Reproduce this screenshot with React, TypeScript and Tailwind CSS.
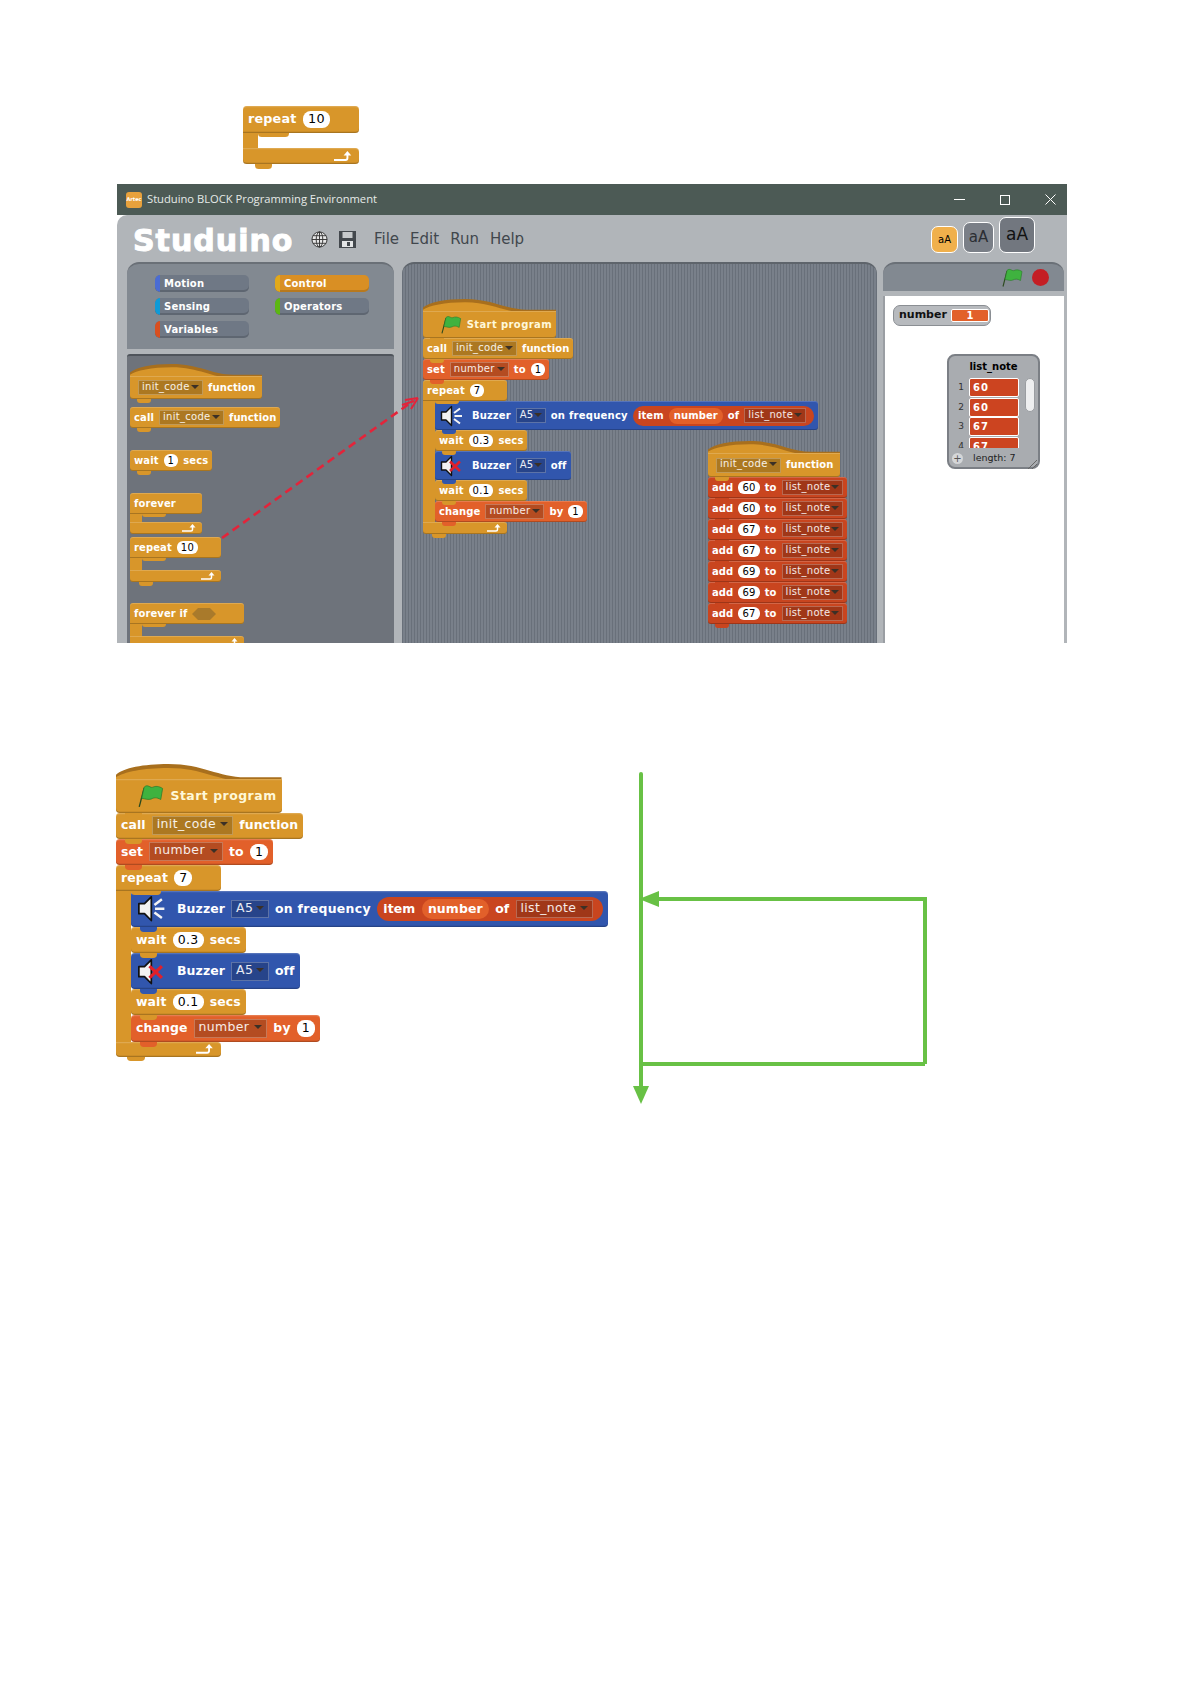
import React from "react";

type Tone = "control" | "variable" | "list" | "motion";
const toneBg: Record<Tone, string> = {
  control: "bg-[#d8962a]",
  variable: "bg-[#e2602a]",
  list: "bg-[#c9451f]",
  motion: "bg-[#3156ad]",
};
const bevel = "shadow-[inset_0_-1px_0_rgba(0,0,0,0.22),inset_0_1px_0_rgba(255,255,255,0.18)]";

function Block({ tone, className = "", children, bump = true }: { tone: Tone; className?: string; children?: React.ReactNode; bump?: boolean }) {
  const sized = /(^|\s)w-/.test(className);
  return (
    <div className={`relative flex h-[21px] items-center gap-[5px] rounded-[3px] px-[4px] ${sized ? "" : "w-fit"} ${toneBg[tone]} ${bevel} ${className}`}>
      {children}
      {bump && <div className={`absolute top-full left-[7px] z-10 h-[4px] w-[14px] rounded-b-[3px] ${toneBg[tone]}`} />}
    </div>
  );
}

function T({ children }: { children: React.ReactNode }) {
  return <span className="whitespace-nowrap text-[10px] leading-none font-bold tracking-[0.1px] text-white">{children}</span>;
}

function Num({ children }: { children: React.ReactNode }) {
  return <span className="flex h-[13px] items-center rounded-[6px] bg-white px-[4px] text-[10px] leading-none tracking-[0.3px] text-black">{children}</span>;
}

function Drop({ children, className = "" }: { children: React.ReactNode; className?: string }) {
  return (
    <span className={`flex h-[15px] items-center justify-between border border-white/25 bg-black/20 pr-[3px] pb-[2px] pl-[3px] text-[10px] leading-none tracking-[0.3px] text-white/90 ${className}`}>
      {children}
      <span className="h-0 w-0 border-x-[4px] border-t-[4px] border-x-transparent border-t-[#3b3026]" />
    </span>
  );
}

function Flag({ className = "" }: { className?: string }) {
  return (
    <svg viewBox="0 0 21 19" className={className}>
      <path d="M1 18.5 L5 3" stroke="#2c4a1e" strokeWidth="1.1" fill="none" />
      <path d="M5 2.5 C8 -0.5 10 3.5 12 2.5 C14 1.5 17 1.5 20 3.5 L18.5 12.5 C15 10.5 13 11 11 12 C8.5 13 6 12 3 11.5 Z" fill="#3fb23f" stroke="#2a7a2a" strokeWidth="0.6" />
    </svg>
  );
}

function Hat({ tone = "control", width, children, bodyClass = "" }: { tone?: Tone; width: string; children: React.ReactNode; bodyClass?: string }) {
  return (
    <div className={`relative pt-[12px] ${width}`}>
      <svg viewBox="0 0 133 14" preserveAspectRatio="none" className="absolute top-0 left-0 h-[15px] w-full">
        <path d="M0 15 V8 C6 3 22 0 42 0 C70 0 82 10 104 10 H133 V15 Z" fill="#a86f1d" />
        <path d="M0 15 V10 C6 6 22 3 42 3 C70 3 82 13 104 13 H133 V15 Z" fill="#d8962a" />
      </svg>
      <Block tone={tone} className={`w-full rounded-t-none ${bodyClass}`}>{children}</Block>
    </div>
  );
}

function ReturnArrow() {
  return (
    <svg viewBox="0 0 15 8" className="h-[8px] w-[15px]">
      <path d="M0 7 H9 Q10.5 7 10.5 5.5 V3" stroke="white" strokeWidth="1.5" fill="none" />
      <path d="M7.5 3.5 L10.5 0 L13.5 3.5 Z" fill="white" />
    </svg>
  );
}

function Loop({ head, width, children, footBump = true }: { head: React.ReactNode; width: string; children?: React.ReactNode; footBump?: boolean }) {
  return (
    <div className="flex w-fit flex-col items-start">
      <Block tone="control" bump={false} className={`${width} h-[20px] rounded-bl-none`}>
        {head}
        <div className="absolute top-full left-[12px] z-10 h-[3px] w-[24px] rounded-b-[3px] bg-[#d8962a]" />
      </Block>
      <div className="flex">
        <div className="w-[12px] self-stretch bg-[#d8962a]" />
        <div className="flex flex-col">{children}</div>
      </div>
      <div className={`relative flex h-[12px] items-center justify-end rounded-[3px] rounded-tl-none bg-[#d8962a] pr-[5px] ${bevel} ${width}`}>
        <ReturnArrow />
        {footBump && <div className="absolute top-full left-[9px] z-10 h-[4px] w-[14px] rounded-b-[3px] bg-[#d8962a]" />}
      </div>
    </div>
  );
}

function Speaker({ off }: { off?: boolean }) {
  return (
    <svg viewBox="0 0 24 22" className="h-[22px] w-[24px]">
      <path d="M1.5 7 H6 L11.5 1.5 V20.5 L6 15 H1.5 Z" fill="#f2f2f2" stroke="#111" strokeWidth="1.4" strokeLinejoin="round" />
      {off ? (
        <path d="M10 6.5 L20 16 M20 6.5 L10 16" stroke="#e0202a" strokeWidth="2.6" />
      ) : (
        <path d="M14 8 L20 3.5 M14.5 11 H22 M14 14 L20 18.5" stroke="#f4f4f4" strokeWidth="2" />
      )}
    </svg>
  );
}

function MainScript() {
  return (
    <div className="flex w-fit flex-col font-['DejaVu_Sans',sans-serif]">
      <Hat width="w-[133px]" bodyClass="h-[27px] pl-[18px] gap-[3px]">
        <Flag className="h-[19px] w-[21px]" />
        <span className="text-[10px] leading-none font-bold tracking-[0.4px] whitespace-nowrap text-[#fff8d8]">Start program</span>
      </Hat>
      <Block tone="control">
        <T>call</T>
        <Drop className="w-[65px]">init_code</Drop>
        <T>function</T>
      </Block>
      <Block tone="variable">
        <T>set</T>
        <Drop className="w-[59px]">number</Drop>
        <T>to</T>
        <Num>1</Num>
      </Block>
      <Loop
        width="w-[84px]"
        head={
          <>
            <T>repeat</T>
            <Num>7</Num>
          </>
        }
      >
        <Block tone="motion" className="h-[29px] pl-[5px]">
          <span className="mr-[3px] flex"><Speaker /></span>
          <T>Buzzer</T>
          <Drop className="w-[30px]">A5</Drop>
          <span className="whitespace-nowrap text-[10px] leading-none font-bold tracking-[0.25px] text-white">on frequency</span>
          <span className="flex h-[20px] items-center gap-[5px] rounded-[10px] bg-[#c9451f] pr-[8px] pl-[5px]">
            <T>item</T>
            <span className="flex h-[16px] items-center rounded-[8px] bg-[#e2602a] px-[5px]"><T>number</T></span>
            <T>of</T>
            <Drop className="w-[62px]">list_note</Drop>
          </span>
        </Block>
        <Block tone="control">
          <T>wait</T>
          <Num>0.3</Num>
          <T>secs</T>
        </Block>
        <Block tone="motion" className="h-[29px] pl-[5px]">
          <span className="mr-[3px] flex"><Speaker off /></span>
          <T>Buzzer</T>
          <Drop className="w-[30px]">A5</Drop>
          <T>off</T>
        </Block>
        <Block tone="control" className="h-[20px]">
          <T>wait</T>
          <Num>0.1</Num>
          <T>secs</T>
        </Block>
        <Block tone="variable" className="h-[20px]">
          <T>change</T>
          <Drop className="w-[59px]">number</Drop>
          <T>by</T>
          <Num>1</Num>
        </Block>
      </Loop>
    </div>
  );
}

function AddRow({ n }: { n: number }) {
  return (
    <Block tone="list" className="h-[21px] w-[139px]">
      <T>add</T>
      <Num>{n}</Num>
      <T>to</T>
      <Drop className="w-[62px]">list_note</Drop>
    </Block>
  );
}

function Category({ label, strip, active }: { label: string; strip: string; active?: boolean }) {
  return (
    <div className={`flex h-[17px] w-[94px] overflow-hidden rounded-[5px] shadow-[inset_0_-2px_0_rgba(0,0,0,0.15)] ${active ? "bg-[#d98f24]" : "bg-[#6f7885]"}`}>
      <div className={`w-[5px] rounded-l-[5px] ${strip}`} />
      <span className="ml-[4px] self-center text-[10px] leading-none font-bold tracking-[0.2px] text-white">{label}</span>
    </div>
  );
}

function ListRow({ i, v, clip }: { i: number; v: number; clip?: boolean }) {
  return (
    <div className={`flex items-start ${clip ? "h-[11px] overflow-hidden" : "h-[19.5px]"}`}>
      <span className="flex w-[20px] justify-end pt-[5px] pr-[5px] text-[9px] leading-none text-[#333]">{i}</span>
      <span className="flex h-[19px] w-[50px] shrink-0 items-center rounded-[2px] border border-white bg-[#cc4420] pl-[3px] text-[10px] font-bold tracking-[1px] text-white">{v}</span>
    </div>
  );
}

export default function App() {
  return (
    <div className="h-[1684px] w-[1191px] overflow-hidden bg-white pt-[106px] font-['DejaVu_Sans',sans-serif]">
      <div className="ml-[243px] h-[78px]">
        <div className="w-fit [zoom:1.28]">
          <Loop
            width="w-[91px]"
            head={
              <>
                <T>repeat</T>
                <Num>10</Num>
              </>
            }
          >
            <div className="h-[12px]" />
          </Loop>
        </div>
      </div>

      {/* application window */}
      <div className="relative ml-[117px] h-[459px] w-[950px] overflow-hidden bg-white">
        <div className="flex h-[31px] items-center bg-[#4c5a55] pl-[9px]">
          <div className="flex h-[16px] w-[16px] items-center justify-center rounded-[3px] bg-[#e8a13c] text-[5px] font-bold text-white">Artec</div>
          <span className="ml-[5px] font-['Open_Sans',sans-serif] text-[11.2px] text-[#e6eae8]">Studuino BLOCK Programming Environment</span>
          <div className="ml-auto flex items-center gap-[35px] pr-[11px]">
            <div className="h-px w-[11px] bg-white" />
            <div className="h-[10px] w-[10px] border border-white" />
            <svg viewBox="0 0 11 11" className="h-[11px] w-[11px]"><path d="M0.5 0.5 L10.5 10.5 M10.5 0.5 L0.5 10.5" stroke="white" strokeWidth="1" /></svg>
          </div>
        </div>

        <div className="h-[428px] rounded-tl-[10px] bg-[#b1b5b9] pl-[10px]">
          {/* menu bar */}
          <div className="flex h-[47px] items-start">
            <span className="mt-[11px] ml-[6px] w-[167px] text-[30px] leading-[30px] font-bold tracking-[1px] text-white [-webkit-text-stroke:1px_white]">Studuino</span>
            <svg viewBox="0 0 18 18" className="mt-[16px] ml-[11px] h-[17px] w-[17px]" fill="none" stroke="#333" strokeWidth="1">
              <circle cx="9" cy="9" r="8" fill="#e8e8e8" />
              <ellipse cx="9" cy="9" rx="3.5" ry="8" />
              <path d="M1 9 H17 M2 5 H16 M2 13 H16 M9 1 V17" />
            </svg>
            <svg viewBox="0 0 17 17" className="mt-[16px] ml-[11px] h-[17px] w-[17px]">
              <path d="M0 0 H17 V17 H0 Z" fill="#43484d" />
              <rect x="3.5" y="1" width="10" height="6" fill="#c7cacc" />
              <rect x="3" y="10" width="11" height="6" fill="#e3e5e6" />
              <rect x="8" y="11" width="3" height="4" fill="#43484d" />
            </svg>
            <div className="mt-[15px] ml-[18px] flex gap-[11px] text-[15px] leading-[18px] text-[#41474d]">
              <span>File</span>
              <span>Edit</span>
              <span>Run</span>
              <span>Help</span>
            </div>
            <div className="ml-auto flex items-end gap-[5px] pt-[2px] pr-[32px]">
              <div className="flex h-[27px] w-[27px] items-center justify-center rounded-[7px] border border-white bg-[#f0b04c] text-[10px] text-black">aA</div>
              <div className="flex h-[31px] w-[31px] items-center justify-center rounded-[7px] border border-white bg-[#7a7f87] text-[15px] text-[#2b2e33]">aA</div>
              <div className="flex h-[36px] w-[36px] items-center justify-center rounded-[7px] border border-white bg-[#72777f] text-[17px] text-[#111]">aA</div>
            </div>
          </div>

          <div className="flex h-[381px]">
            {/* left column */}
            <div className="flex w-[267px] flex-col gap-[5px]">
              <div className="grid h-[87px] grid-cols-[120px_94px] content-start gap-x-0 gap-y-[6px] rounded-t-[12px] border-t-2 border-[#6a7077] bg-[#828991] pt-[11px] pl-[28px]">
                <Category label="Motion" strip="bg-[#4a6cd4]" />
                <Category label="Control" strip="bg-[#e1a91a]" active />
                <Category label="Sensing" strip="bg-[#0e9ad8]" />
                <Category label="Operators" strip="bg-[#5cb712]" />
                <Category label="Variables" strip="bg-[#d94f1f]" />
              </div>
              <div className="flex-1 overflow-hidden rounded-t-[3px] border-t-2 border-[#4f545b] bg-[#6e737b] pt-[8px] pl-[3px]">
                <Hat width="w-[132px]" bodyClass="h-[23px] pl-[8px]">
                  <Drop className="w-[65px]">init_code</Drop>
                  <T>function</T>
                </Hat>
                <Block tone="control" className="mt-[8px] h-[19px]">
                  <T>call</T>
                  <Drop className="w-[65px]">init_code</Drop>
                  <T>function</T>
                </Block>
                <Block tone="control" className="mt-[22px] h-[19px]">
                  <T>wait</T>
                  <Num>1</Num>
                  <T>secs</T>
                </Block>
                <div className="mt-[22px]">
                  <Loop width="w-[72px]" footBump={false} head={<T>forever</T>}>
                    <div className="h-[8px]" />
                  </Loop>
                </div>
                <div className="mt-[3px]">
                  <Loop
                    width="w-[91px]"
                    head={
                      <>
                        <T>repeat</T>
                        <Num>10</Num>
                      </>
                    }
                  >
                    <div className="h-[12px]" />
                  </Loop>
                </div>
                <div className="mt-[21px]">
                  <Loop
                    width="w-[114px]"
                    head={
                      <>
                        <T>forever if</T>
                        <svg viewBox="0 0 24 12" className="h-[12px] w-[24px]">
                          <path d="M0 6 L6 0 H18 L24 6 L18 12 H6 Z" fill="#a97a2b" />
                        </svg>
                      </>
                    }
                  >
                    <div className="h-[12px]" />
                  </Loop>
                </div>
              </div>
            </div>

            {/* scripts area */}
            <div className="relative ml-[8px] w-[475px] rounded-t-[12px] border-t-2 border-[#5e646b] bg-[repeating-linear-gradient(90deg,#69707a_0,#69707a_1px,#79808a_1px,#79808a_3px)]">
              <div className="absolute top-[35px] left-[21px]">
                <MainScript />
              </div>
              <div className="absolute top-[177px] left-[306px] flex flex-col">
                <Hat width="w-[132px]" bodyClass="h-[24px] pl-[8px]">
                  <Drop className="w-[65px]">init_code</Drop>
                  <T>function</T>
                </Hat>
                <AddRow n={60} />
                <AddRow n={60} />
                <AddRow n={67} />
                <AddRow n={67} />
                <AddRow n={69} />
                <AddRow n={69} />
                <AddRow n={67} />
              </div>
            </div>

            {/* stage column */}
            <div className="ml-[6px] flex w-[181px] flex-col gap-[5px]">
              <div className="flex h-[29px] items-center justify-end gap-[9px] rounded-t-[12px] border-t-2 border-[#6a7077] bg-[#828991] pr-[15px]">
                <Flag className="h-[19px] w-[21px]" />
                <div className="h-[17px] w-[17px] rounded-full bg-[#c41e24]" />
              </div>
              <div className="flex-1 border-l-2 border-[#9a9ea3] bg-white pt-[9px] pl-[8px]">
                <div className="flex h-[21px] w-[98px] items-center gap-[4px] rounded-[7px] border border-[#8a8e93] bg-[#b7babe] pl-[5px] text-[11px] font-bold text-[#111]">
                  number
                  <span className="flex h-[13px] w-[38px] items-center justify-center rounded-[2px] border border-white bg-[#e2602a] text-[10px] font-bold text-white">1</span>
                </div>
                <div className="mt-[28px] ml-[54px] h-[115px] w-[93px] rounded-[8px] border-2 border-[#7b7f85] bg-[#a9acb0]">
                  <div className="pt-[4px] text-center text-[10px] leading-[14px] font-bold text-black">list_note</div>
                  <div className="relative mt-[4px]">
                    <ListRow i={1} v={60} />
                    <ListRow i={2} v={60} />
                    <ListRow i={3} v={67} />
                    <ListRow i={4} v={67} clip />
                    <div className="absolute top-[0px] left-[76px] h-[34px] w-[10px] rounded-[5px] border border-[#9a9da1] bg-[#eeeff0]" />
                  </div>
                  <div className="relative flex h-[22px] items-center pl-[3px] text-[9.5px] text-[#222]">
                    <span className="flex h-[11px] w-[11px] items-center justify-center rounded-full bg-[#d4d6d8] text-[10px] leading-none text-[#555]">+</span>
                    <span className="ml-[10px]">length: 7</span>
                    <svg viewBox="0 0 10 10" className="absolute right-[1px] bottom-[1px] h-[10px] w-[10px]"><path d="M1 10 L10 1 M5 10 L10 5" stroke="#666" strokeWidth="1" /></svg>
                  </div>
                </div>
              </div>
            </div>
          </div>
        </div>

        {/* red drag arrow */}
        <svg viewBox="0 0 950 459" className="pointer-events-none absolute inset-0 z-20 h-[459px] w-[950px]">
          <path d="M105 354 L296 217" stroke="#e3243a" strokeWidth="2.6" strokeDasharray="8 5" fill="none" />
          <path d="M301 214 L288 216 M301 214 L294 225 M297 217 L285 221" stroke="#e3243a" strokeWidth="2" fill="none" />
        </svg>
      </div>

      {/* lower section */}
      <div className="mt-[121px] ml-[116px] flex items-start">
        <div className="w-[514px] shrink-0">
          <div className="w-fit [zoom:1.245]">
            <MainScript />
          </div>
        </div>
        <svg viewBox="0 0 310 340" className="mt-[6px] h-[340px] w-[310px]" fill="none">
          <path d="M11 4 V318" stroke="#68c145" strokeWidth="4" strokeLinecap="round" />
          <path d="M3 316 H19 L11 334 Z" fill="#68c145" />
          <path d="M24 129 H297 M295 129 V294 M295 294 H11" stroke="#68c145" strokeWidth="4" />
          <path d="M9 129 L29 121 V137 Z" fill="#68c145" />
        </svg>
      </div>
    </div>
  );
}
